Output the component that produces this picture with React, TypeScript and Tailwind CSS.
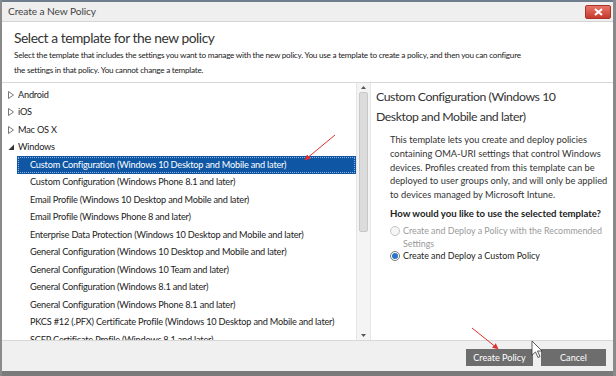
import React from 'react'

const platforms = ['Android', 'iOS', 'Mac OS X']

const templates = [
    'Custom Configuration (Windows 10 Desktop and Mobile and later)',
    'Custom Configuration (Windows Phone 8.1 and later)',
    'Email Profile (Windows 10 Desktop and Mobile and later)',
    'Email Profile (Windows Phone 8 and later)',
    'Enterprise Data Protection (Windows 10 Desktop and Mobile and later)',
    'General Configuration (Windows 10 Desktop and Mobile and later)',
    'General Configuration (Windows 10 Team and later)',
    'General Configuration (Windows 8.1 and later)',
    'General Configuration (Windows Phone 8.1 and later)',
    'PKCS #12 (.PFX) Certificate Profile (Windows 10 Desktop and Mobile and later)',
    'SCEP Certificate Profile (Windows 8.1 and later)',
]

function Collapsed() {
    return (
        <svg width="6" height="8" viewBox="0 0 6 8" className="mr-[4px]">
            <path d="M0.5 0.5 L5.5 4 L0.5 7.5 Z" fill="none" stroke="#777" strokeWidth="1" />
        </svg>
    )
}

function Expanded() {
    return (
        <svg width="6" height="8" viewBox="0 0 6 8" className="mr-[4px]">
            <path d="M6 1.5 L6 7 L0.5 7 Z" fill="#333" />
        </svg>
    )
}

export default function App() {
    return (
        <div
            className="relative w-[616px] h-[376px] flex flex-col bg-white overflow-hidden border-l-2 border-r-[3px] border-[#8a8a8a]"
            style={{ fontFamily: 'Lato, "Open Sans", sans-serif' }}
        >
            <div className="h-[2px] bg-[#6f7d8c]" />
            {/* title bar */}
            <div className="h-[20px] flex items-center justify-between bg-[#efefef] border-b border-[#d4d4d4] pl-[6px] pr-[2px]">
                <span className="text-[10.2px] tracking-[-0.1px] text-[#444]">Create a New Policy</span>
                <button className="w-[26px] h-[14px] rounded-[2px] bg-gradient-to-b from-[#e8756a] to-[#c7382c] border border-[#a8332a] flex items-center justify-center">
                    <svg width="9" height="8" viewBox="0 0 9 8">
                        <path d="M1 1 L8 7 M8 1 L1 7" stroke="white" strokeWidth="2" />
                    </svg>
                </button>
            </div>

            {/* header */}
            <div className="px-[12px] pt-[5px] h-[60px]">
                <h1 className="text-[13.8px] leading-[22px] text-[#333] tracking-[-0.45px]">Select a template for the new policy</h1>
                <p className="w-[514px] text-[8.2px] leading-[14.5px] tracking-[-0.25px] text-[#222] -mt-[1px]">
                    Select the template that includes the settings you want to manage with the new policy. You use a template to create a policy, and then you can configure the settings in that policy. You cannot change a template.
                </p>
            </div>

            {/* body */}
            <div className="flex flex-1 border-t border-[#d8d8d8] min-h-0">
                <div className="w-[354px] pt-[3px] text-[9.2px] tracking-[-0.2px] text-[#222] overflow-hidden">
                    {platforms.map((p) => (
                        <div key={p} className="h-[17.5px] flex items-center pl-[6px]">
                            <Collapsed />
                            {p}
                        </div>
                    ))}
                    <div className="h-[17.5px] flex items-center pl-[6px]">
                        <Expanded />
                        Windows
                    </div>
                    {templates.map((t, i) => (
                        <div
                            key={t}
                            className={
                                i === 0
                                    ? 'h-[17.5px] ml-[15px] flex items-center pl-[13px] bg-[#0f57a5] text-white outline outline-1 outline-dotted outline-offset-[-2px] outline-[#8fb0d8]'
                                    : 'h-[17.5px] ml-[15px] flex items-center pl-[13px] whitespace-nowrap'
                            }
                        >
                            {t}
                        </div>
                    ))}
                </div>

                {/* scrollbar */}
                <div className="w-[15px] flex flex-col items-center bg-[#f4f4f4] border-x border-[#e6e6e6]">
                    <div className="h-[9px] flex items-center">
                        <svg width="5" height="3" viewBox="0 0 5 3"><path d="M0 3 L2.5 0 L5 3 Z" fill="#555" /></svg>
                    </div>
                    <div className="w-[9px] h-[140px] rounded-[2px] bg-[#dcdcdc] border border-[#c8c8c8]" />
                    <div className="flex-1" />
                    <div className="h-[9px] flex items-center">
                        <svg width="5" height="3" viewBox="0 0 5 3"><path d="M0 0 L2.5 3 L5 0 Z" fill="#555" /></svg>
                    </div>
                </div>

                {/* details */}
                <div className="flex-1 pl-[5px] pr-[1px] pt-[4px]">
                    <h2 className="w-[222px] text-[12.3px] leading-[20px] tracking-[-0.45px] text-[#333]">
                        Custom Configuration (Windows 10 Desktop and Mobile and later)
                    </h2>
                    <p className="mt-[6px] ml-[14px] text-[9.3px] leading-[13.75px] text-[#333]">
                        This template lets you create and deploy policies containing OMA-URI settings that control Windows devices. Profiles created from this template can be deployed to user groups only, and will only be applied to devices managed by Microsoft Intune.
                    </p>
                    <p className="mt-[5px] ml-[14px] text-[9.6px] font-bold text-[#222]">
                        How would you like to use the selected template?
                    </p>
                    <div className="ml-[14px] mt-[4px] text-[8.9px] leading-[12.5px]">
                        <label className="flex items-start gap-[3px] text-[#9a9a9a]">
                            <span className="mt-[1px] w-[10px] h-[10px] shrink-0 rounded-full border border-[#c4c4c4] bg-[#f6f6f6]" />
                            <span className="pr-[8px]">Create and Deploy a Policy with the Recommended Settings</span>
                        </label>
                        <label className="flex items-center gap-[3px] text-[#222] mt-[0px]">
                            <span className="w-[10px] h-[10px] shrink-0 rounded-full border border-[#7a7a7a] bg-white flex items-center justify-center">
                                <span className="w-[6px] h-[6px] rounded-full bg-[#2b74c8]" />
                            </span>
                            <span>Create and Deploy a Custom Policy</span>
                        </label>
                    </div>
                </div>
            </div>

            {/* footer */}
            <div className="h-[31px] bg-[#f0f0f0] border-t border-[#d8d8d8] flex items-center justify-end gap-[8px] pr-[7px] pt-[3px]">
                <button className="w-[67px] h-[17px] bg-[#6d6d6d] text-white text-[9.1px] flex items-center justify-center">Create Policy</button>
                <button className="w-[65px] h-[17px] bg-[#6d6d6d] text-white text-[9.1px] flex items-center justify-center">Cancel</button>
            </div>
            <div className="h-[5px] bg-[#7a7a7a]" />

            {/* annotations */}
            <svg className="absolute left-0 top-0 pointer-events-none" width="616" height="376">
                <defs>
                    <marker id="ah" markerWidth="6" markerHeight="6" refX="4" refY="3" orient="auto">
                        <path d="M0 0 L6 3 L0 6 Z" fill="#e03030" />
                    </marker>
                </defs>
                <line x1="333" y1="135" x2="304" y2="159" stroke="#e03030" strokeWidth="1" markerEnd="url(#ah)" />
                <line x1="470" y1="328" x2="495" y2="348" stroke="#e03030" strokeWidth="1" markerEnd="url(#ah)" />
                <path d="M530 341 L530 355 L533.5 352 L536 357.5 L538 356.5 L535.5 351 L540 351 Z" fill="white" stroke="#333" strokeWidth="0.8" />
            </svg>
        </div>
    )
}
